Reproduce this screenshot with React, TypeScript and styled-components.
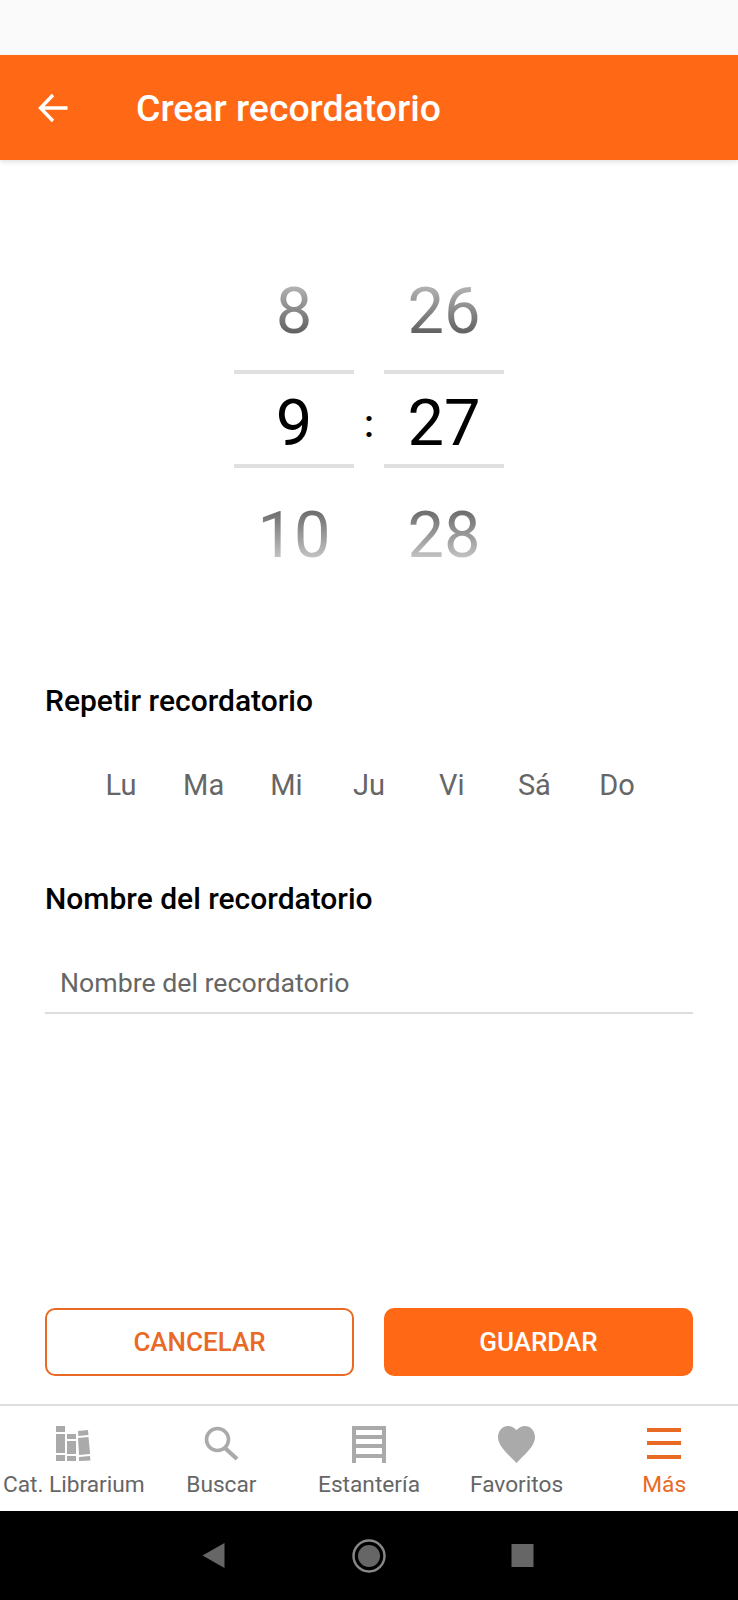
import React from "react";
import styled, { createGlobalStyle } from "styled-components";

const Global = createGlobalStyle`
  html, body { margin: 0; padding: 0; background: #fff; }
  * { box-sizing: border-box; }
  body { font-family: Roboto, "Liberation Sans", sans-serif; }
`;

const Page = styled.div`
  width: 738px;
  height: 1600px;
  display: flex;
  flex-direction: column;
  background: #fff;
  overflow: hidden;
`;
const StatusBar = styled.div`
  height: 55px;
  flex: none;
  background: #fafafa;
`;
const Header = styled.header`
  height: 105px;
  flex: none;
  display: flex;
  align-items: center;
  background: #ff6815;
  box-shadow: 0 2px 5px rgba(0, 0, 0, 0.12);
  padding-left: 36px;
  position: relative;
`;
const BackIcon = styled.svg`
  width: 34px;
  height: 32px;
  flex: none;
`;
const Title = styled.h1`
  margin: 0 0 0 66px;
  font-size: 37.4px;
  font-weight: 500;
  color: #fff;
`;
const Main = styled.main`
  flex: 1;
  display: flex;
  flex-direction: column;
  padding: 118px 45px 0;
`;
const Picker = styled.div`
  display: flex;
  justify-content: center;
  align-items: stretch;
`;
const Column = styled.div`
  width: 120px;
  display: flex;
  flex-direction: column;
  align-items: center;
`;
const FadedNumber = styled.div<{ $dir: "up" | "down" }>`
  height: 66px;
  line-height: 66px;
  font-size: 65px;
  font-weight: 400;
  margin: ${(p) => (p.$dir === "up" ? "0 0 26px" : "34px 0 0")};
  color: transparent;
  background: ${(p) =>
    p.$dir === "up"
      ? "linear-gradient(to bottom, #b8b8b8 0%, #b0b0b0 15%, #5f5f5f 85%)"
      : "linear-gradient(to bottom, #6e6e6e 15%, #c4c4c4 85%)"};
  -webkit-background-clip: text;
  background-clip: text;
`;
const CurrentNumber = styled.div`
  width: 100%;
  height: 98px;
  display: flex;
  align-items: center;
  justify-content: center;
  padding-top: 8px;
  border-top: 4px solid #e0e0e0;
  border-bottom: 4px solid #e0e0e0;
  font-size: 65px;
  color: #000;
`;
const Colon = styled.div`
  width: 30px;
  display: flex;
  align-items: center;
  justify-content: center;
  font-size: 38px;
  font-weight: 500;
  color: #000;
  padding-top: 2px;
`;
const SectionTitle = styled.h2<{ $top: number }>`
  margin: ${(p) => p.$top}px 0 0;
  font-size: 30px;
  line-height: 36px;
  font-weight: 500;
  color: #000;
`;
const Days = styled.div`
  margin-top: 48px;
  display: flex;
  justify-content: center;
`;
const Day = styled.div`
  width: 82.7px;
  text-align: center;
  font-size: 29px;
  line-height: 36px;
  color: #666;
`;
const NameInput = styled.div`
  margin-top: 37px;
  height: 60px;
  padding-left: 15px;
  display: flex;
  align-items: center;
  font-size: 26.7px;
  color: #666;
  border-bottom: 2px solid #ddd;
`;
const Actions = styled.div`
  margin-top: auto;
  margin-bottom: 28px;
  display: flex;
  gap: 30px;
`;
const Button = styled.div<{ $primary?: boolean }>`
  flex: 1;
  height: 68px;
  display: flex;
  align-items: center;
  justify-content: center;
  border-radius: 10px;
  font-size: 26px;
  font-weight: 500;
  color: ${(p) => (p.$primary ? "#fff" : "#e96a25")};
  background: ${(p) => (p.$primary ? "#ff6815" : "#fff")};
  border: 2px solid ${(p) => (p.$primary ? "#ff6815" : "#e96a25")};
`;
const TabBar = styled.nav`
  height: 107px;
  flex: none;
  display: flex;
  border-top: 2px solid #ddd;
  padding-top: 20px;
`;
const Tab = styled.div<{ $active?: boolean }>`
  flex: 1;
  display: flex;
  flex-direction: column;
  align-items: center;
  gap: 8px;
  font-size: 22.7px;
  line-height: 28px;
  white-space: nowrap;
  color: ${(p) => (p.$active ? "#e96a25" : "#666")};
`;
const TabIcon = styled.svg`
  height: 37px;
  width: 37px;
  flex: none;
`;
const NavBar = styled.div`
  height: 89px;
  flex: none;
  background: #000;
  display: flex;
  align-items: center;
  justify-content: center;
`;
const NavIcon = styled.svg`
  width: 36px;
  height: 36px;
  flex: none;
  margin: 0 57px;
`;

const grey = "#aaaaaa";
const orange = "#e96a25";

export default function App() {
  return (
    <Page>
      <Global />
      <StatusBar />
      <Header>
        <BackIcon viewBox="0 0 34 32" fill="none" stroke="#fff" strokeWidth="3.4">
          <path d="M31.5 16H5M17 3 4.5 16 17 29" />
        </BackIcon>
        <Title>Crear recordatorio</Title>
      </Header>
      <Main>
        <Picker>
          <Column>
            <FadedNumber $dir="up">8</FadedNumber>
            <CurrentNumber>9</CurrentNumber>
            <FadedNumber $dir="down">10</FadedNumber>
          </Column>
          <Colon>:</Colon>
          <Column>
            <FadedNumber $dir="up">26</FadedNumber>
            <CurrentNumber>27</CurrentNumber>
            <FadedNumber $dir="down">28</FadedNumber>
          </Column>
        </Picker>
        <SectionTitle $top={115}>Repetir recordatorio</SectionTitle>
        <Days>
          {["Lu", "Ma", "Mi", "Ju", "Vi", "Sá", "Do"].map((d) => (
            <Day key={d}>{d}</Day>
          ))}
        </Days>
        <SectionTitle $top={78}>Nombre del recordatorio</SectionTitle>
        <NameInput>Nombre del recordatorio</NameInput>
        <Actions>
          <Button>CANCELAR</Button>
          <Button $primary>GUARDAR</Button>
        </Actions>
      </Main>
      <TabBar>
        <Tab>
          <TabIcon viewBox="0 0 37 37" fill={grey}>
            <path d="M1 0h9v6H1zM1 8h9v19H1zM1 29h9v6H1z" />
            <path d="M12 8h9v5h-9zM12 15h9v13h-9zM12 30h9v5h-9z" />
            <path d="m23 5 10-1 .4 5-10 1zM23 12l10.5-1 1.6 17-11 1zM24 31l11-1 .4 4.5L24 35z" />
          </TabIcon>
          Cat. Librarium
        </Tab>
        <Tab>
          <TabIcon viewBox="0 0 37 37" fill="none" stroke={grey} strokeWidth="3.6">
            <circle cx="14.5" cy="13.5" r="11" />
            <path d="m22 22 12 11" strokeWidth="4.2" />
          </TabIcon>
          Buscar
        </Tab>
        <Tab>
          <TabIcon viewBox="0 0 37 37" fill={grey}>
            <path d="M2 0h34v37h-4v-5H6v5H2zM6 4v5h26V4zM6 13v5h26v-5zM6 22v6h26v-6z" fillRule="evenodd" />
          </TabIcon>
          Estantería
        </Tab>
        <Tab>
          <TabIcon viewBox="2 3 20 18.35" fill={grey} preserveAspectRatio="none">
            <path d="M12 21.35l-1.45-1.32C5.4 15.36 2 12.28 2 8.5 2 5.42 4.42 3 7.5 3c1.74 0 3.41.81 4.5 2.09C13.09 3.81 14.76 3 16.5 3 19.58 3 22 5.42 22 8.5c0 3.78-3.4 6.86-8.55 11.54L12 21.35z" />
          </TabIcon>
          Favoritos
        </Tab>
        <Tab $active>
          <TabIcon viewBox="0 0 37 37" fill={orange}>
            <path d="M1 2h34v4H1zM1 15h34v4H1zM1 29h34v4H1z" />
          </TabIcon>
          Más
        </Tab>
      </TabBar>
      <NavBar>
        <NavIcon viewBox="0 0 36 36" fill="#666">
          <path d="M23.5 5v25L1.5 17.5z" />
        </NavIcon>
        <NavIcon viewBox="0 0 36 36">
          <circle cx="18" cy="18" r="15.5" fill="none" stroke="#888" strokeWidth="2.4" />
          <circle cx="18" cy="18" r="11" fill="#666" />
        </NavIcon>
        <NavIcon viewBox="0 0 36 36" fill="#666">
          <path d="M10.5 6h22v23h-22z" />
        </NavIcon>
      </NavBar>
    </Page>
  );
}
